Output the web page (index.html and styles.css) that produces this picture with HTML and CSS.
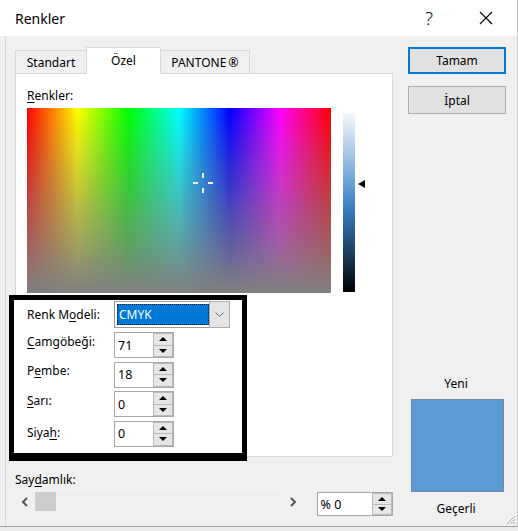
FILE: index.html
```html
<!DOCTYPE html>
<html lang="tr">
<head>
<meta charset="utf-8">
<title>Renkler</title>
<link rel="stylesheet" href="styles.css">
</head>
<body>
<div class="window">
  <div class="titlebar">
    <span class="title">Renkler</span>
    <span class="cap-btn help">?</span>
    <span class="cap-btn close">
      <svg width="14" height="14" viewBox="0 0 14 14"><path d="M1 1 L13 13 M13 1 L1 13" stroke="#000" stroke-width="1.1" fill="none"/></svg>
    </span>
  </div>
  <div class="body">
    <div class="left">
      <div class="tabs">
        <div class="tab tab-std">Standart</div>
        <div class="tab tab-active">Özel</div>
        <div class="tab tab-pan">PANTONE<span class="reg">®</span></div>
      </div>
      <div class="panel">
        <div class="caption"><u>R</u>enkler:</div>
        <div class="picker">
          <div class="spectrum">
            <svg class="crosshair" width="22" height="22" viewBox="0 0 22 22">
              <rect x="10" y="1" width="2" height="5" fill="#eef4ff"/>
              <rect x="10" y="16" width="2" height="5" fill="#eef4ff"/>
              <rect x="1" y="10" width="5" height="2" fill="#eef4ff"/>
              <rect x="16" y="10" width="5" height="2" fill="#eef4ff"/>
            </svg>
          </div>
          <div class="lum"></div>
          <div class="lum-arrow"></div>
        </div>
        <div class="model-box">
          <div class="row row-first">
            <span class="lbl lbl-first">Renk M<u>o</u>deli:</span>
            <div class="select">
              <div class="select-field"><span class="select-value">CMYK</span></div>
              <div class="select-btn">
                <svg width="9" height="6" viewBox="0 0 9 6"><path d="M0.5 0.5 L4.5 4.5 L8.5 0.5" stroke="#6a6a6a" stroke-width="1" fill="none"/></svg>
              </div>
            </div>
          </div>
          <div class="row">
            <span class="lbl"><u>C</u>amgöbeği:</span>
            <div class="num"><span class="num-val">71</span><div class="spin"><span class="spin-b"><i class="up"></i></span><span class="spin-b"><i class="down"></i></span></div></div>
          </div>
          <div class="row">
            <span class="lbl lbl-b">P<u>e</u>mbe:</span>
            <div class="num"><span class="num-val">18</span><div class="spin"><span class="spin-b"><i class="up"></i></span><span class="spin-b"><i class="down"></i></span></div></div>
          </div>
          <div class="row">
            <span class="lbl"><u>S</u>arı:</span>
            <div class="num"><span class="num-val">0</span><div class="spin"><span class="spin-b"><i class="up"></i></span><span class="spin-b"><i class="down"></i></span></div></div>
          </div>
          <div class="row">
            <span class="lbl lbl-d">Siya<u>h</u>:</span>
            <div class="num"><span class="num-val">0</span><div class="spin"><span class="spin-b"><i class="up"></i></span><span class="spin-b"><i class="down"></i></span></div></div>
          </div>
        </div>
      </div>
      <div class="transp">
        <div class="caption">Say<u>d</u>amlık:</div>
        <div class="slider-row">
          <div class="scrollbar">
            <span class="sb-btn">
              <svg width="8" height="10" viewBox="0 0 8 10"><path d="M6 1 L2 5 L6 9" stroke="#555" stroke-width="2" fill="none"/></svg>
            </span>
            <span class="sb-thumb"></span>
            <span class="sb-track"></span>
            <span class="sb-btn">
              <svg width="8" height="10" viewBox="0 0 8 10"><path d="M2 1 L6 5 L2 9" stroke="#555" stroke-width="2" fill="none"/></svg>
            </span>
          </div>
          <div class="num num-pct"><span class="num-val">% 0</span><div class="spin"><span class="spin-b"><i class="up"></i></span><span class="spin-b"><i class="down"></i></span></div></div>
        </div>
      </div>
    </div>
    <div class="right">
      <div class="btn btn-default">Tamam</div>
      <div class="btn btn-cancel">İptal</div>
      <div class="preview">
        <div class="pv-label">Yeni</div>
        <div class="swatch"></div>
        <div class="pv-label pv-cur">Geçerli</div>
      </div>
    </div>
  </div>
  <svg class="grip" width="12" height="12" viewBox="0 0 12 12">
    <path d="M11 3 L3 11 M11 6 L6 11 M11 9 L9 11" stroke="#b0b0b0" stroke-width="1" fill="none"/>
  </svg>
</div>
</body>
</html>
```

FILE: styles.css
```css
html, body {
  margin: 0;
  padding: 0;
}
body {
  width: 518px;
  height: 531px;
  overflow: hidden;
  background: #ececec;
  font-family: "Noto Sans", "Open Sans", sans-serif;
  font-size: 12px;
  color: #000;
}
u { text-decoration: underline; text-underline-offset: 2px; }

.window {
  position: relative;
  height: 527px;
  box-sizing: border-box;
  background: #f0f0f0;
  border-bottom: 1px solid #a3a3a3;
  border-right: 1px solid #c9c9c9;
}

.titlebar {
  height: 36px;
  background: #fff;
  display: flex;
  align-items: center;
  padding-left: 15px;
}
.title {
  flex: 1;
  font-size: 14px;
}
.cap-btn {
  width: 46px;
  height: 36px;
  display: flex;
  align-items: center;
  justify-content: center;
}
.help {
  font-family: "Noto Sans", sans-serif;
  font-size: 19px;
  font-weight: 300;
  color: #111;
  margin-right: 11px;
}
.close { margin-right: 8px; }

.body {
  display: flex;
  gap: 15px;
  height: 490px;
  margin-left: 5px;
  border-left: 1px solid #d9d9d9;
  padding-left: 9px;
}

.left {
  width: 378px;
  padding-top: 11px;
}
.tabs {
  display: flex;
  align-items: flex-end;
  height: 26px;
}
.tab {
  box-sizing: border-box;
  height: 23px;
  border: 1px solid #d9d9d9;
  border-bottom: none;
  background: #f0f0f0;
  display: flex;
  align-items: center;
  justify-content: center;
}
.tab-std { width: 72px; }
.tab-active {
  width: 75px;
  height: 27px;
  margin-left: -1px;
  margin-bottom: -1px;
  background: #fff;
  position: relative;
  z-index: 1;
  padding-bottom: 1px;
}
.tab-pan { width: 90px; margin-left: -1px; }
.reg { margin-left: 2px; font-size: 12.5px; }

.panel {
  box-sizing: border-box;
  height: 384px;
  border: 1px solid #d9d9d9;
  background: #fff;
  padding: 14px 0 0 11px;
}
.caption {
  line-height: 16px;
  height: 16px;
}

.picker {
  display: flex;
  align-items: flex-start;
  margin-top: 4px;
  height: 185px;
}
.spectrum {
  position: relative;
  width: 304px;
  height: 185px;
  background:
    linear-gradient(to bottom, rgba(128,128,128,0), #808080),
    linear-gradient(to right, #f00, #ff0 16.67%, #0f0 33.33%, #0ff 50%, #00f 66.67%, #f0f 83.33%, #f00);
}
.crosshair {
  position: absolute;
  left: 165px;
  top: 64px;
}
.lum {
  width: 12px;
  height: 179px;
  margin-left: 12px;
  margin-top: 5px;
  background: linear-gradient(to bottom, #f4f8fc, #a9c8e6 22%, #3a82c8 52%, #1d4468 76%, #000);
}
.lum-arrow {
  width: 0;
  height: 0;
  margin-left: 3px;
  margin-top: 72px;
  border-top: 4px solid transparent;
  border-bottom: 4px solid transparent;
  border-right: 7px solid #000;
}

.model-box {
  box-sizing: border-box;
  width: 238px;
  height: 166px;
  margin-top: 2px;
  margin-left: -18px;
  border: 5px solid #000;
  border-bottom-width: 8px;
  background: #fff;
  padding: 1px 0 0 13px;
  display: flex;
  flex-direction: column;
  position: relative;
  z-index: 2;
}
.row {
  display: flex;
  align-items: flex-start;
  margin-top: 3.5px;
}
.row-first { margin-top: 0; }
.row:nth-child(2) { margin-top: 4px; }
.lbl {
  width: 87px;
  line-height: 16px;
  padding-top: 2px;
}
.lbl-first { padding-top: 6px; }
.lbl-b { padding-top: 1px; }
.lbl-d { padding-top: 4px; }

.select {
  display: flex;
  height: 27px;
}
.select-field {
  box-sizing: border-box;
  width: 95px;
  height: 27px;
  border: 1px solid #9a9a9a;
  border-right: none;
  padding: 2px 0 2px 2px;
  background: #fff;
}
.select-value {
  display: flex;
  align-items: center;
  box-sizing: border-box;
  height: 21px;
  background: #0078d7;
  color: #fff;
  border: 1px dotted #1a1a1a;
  padding-left: 1px;
}
.select-btn {
  box-sizing: border-box;
  width: 21px;
  height: 27px;
  border: 1px solid #adadad;
  background: #e5e5e5;
  display: flex;
  align-items: center;
  justify-content: center;
}

.num {
  box-sizing: border-box;
  width: 60px;
  height: 26px;
  border: 1px solid #a8a8a8;
  background: #fff;
  display: flex;
  align-items: stretch;
}
.num-val {
  flex: 1;
  display: flex;
  align-items: center;
  padding-left: 3px;
  font-size: 12.5px;
}
.spin {
  width: 20px;
  display: flex;
  flex-direction: column;
}
.spin-b {
  flex: 1;
  box-sizing: border-box;
  border: 1px solid #b9b9b9;
  background: #e6e6e6;
  display: flex;
  align-items: center;
  justify-content: center;
}
.spin-b + .spin-b { border-top: none; }
.up, .down {
  width: 0;
  height: 0;
  border-left: 4px solid transparent;
  border-right: 4px solid transparent;
}
.up { border-bottom: 4px solid #000; }
.down { border-top: 4px solid #000; }

.transp {
  margin-top: 15px;
}
.slider-row {
  display: flex;
  align-items: flex-start;
  margin-top: 4px;
}
.scrollbar {
  display: flex;
  align-items: stretch;
  width: 290px;
  height: 19px;
}
.sb-btn {
  width: 20px;
  display: flex;
  align-items: center;
  justify-content: center;
}
.sb-thumb {
  width: 21px;
  background: #cdcdcd;
}
.sb-track {
  flex: 1;
  border-top: 1px solid #f8f8f8;
  margin-top: -3px;
}
.num-pct {
  width: 77px;
  height: 24px;
  margin-left: 14px;
}

.right {
  width: 98px;
  padding-top: 11px;
  display: flex;
  flex-direction: column;
}
.btn {
  box-sizing: border-box;
  height: 27px;
  background: #e1e1e1;
  border: 1px solid #adadad;
  display: flex;
  align-items: center;
  justify-content: center;
}
.btn-default {
  border: 2px solid #0078d7;
}
.btn-cancel {
  margin-top: 12px;
  height: 28px;
}
.preview {
  margin-top: auto;
  padding-bottom: 9px;
}
.pv-label {
  text-align: center;
  line-height: 16px;
  padding-right: 2px;
}
.swatch {
  box-sizing: border-box;
  width: 93px;
  height: 93px;
  margin: 7px 0 0 3px;
  background: #5b9bd5;
  border: 1px solid #6f8aa5;
}
.pv-cur { margin-top: 9px; }

.grip {
  position: absolute;
  right: 1px;
  bottom: 1px;
}
```
